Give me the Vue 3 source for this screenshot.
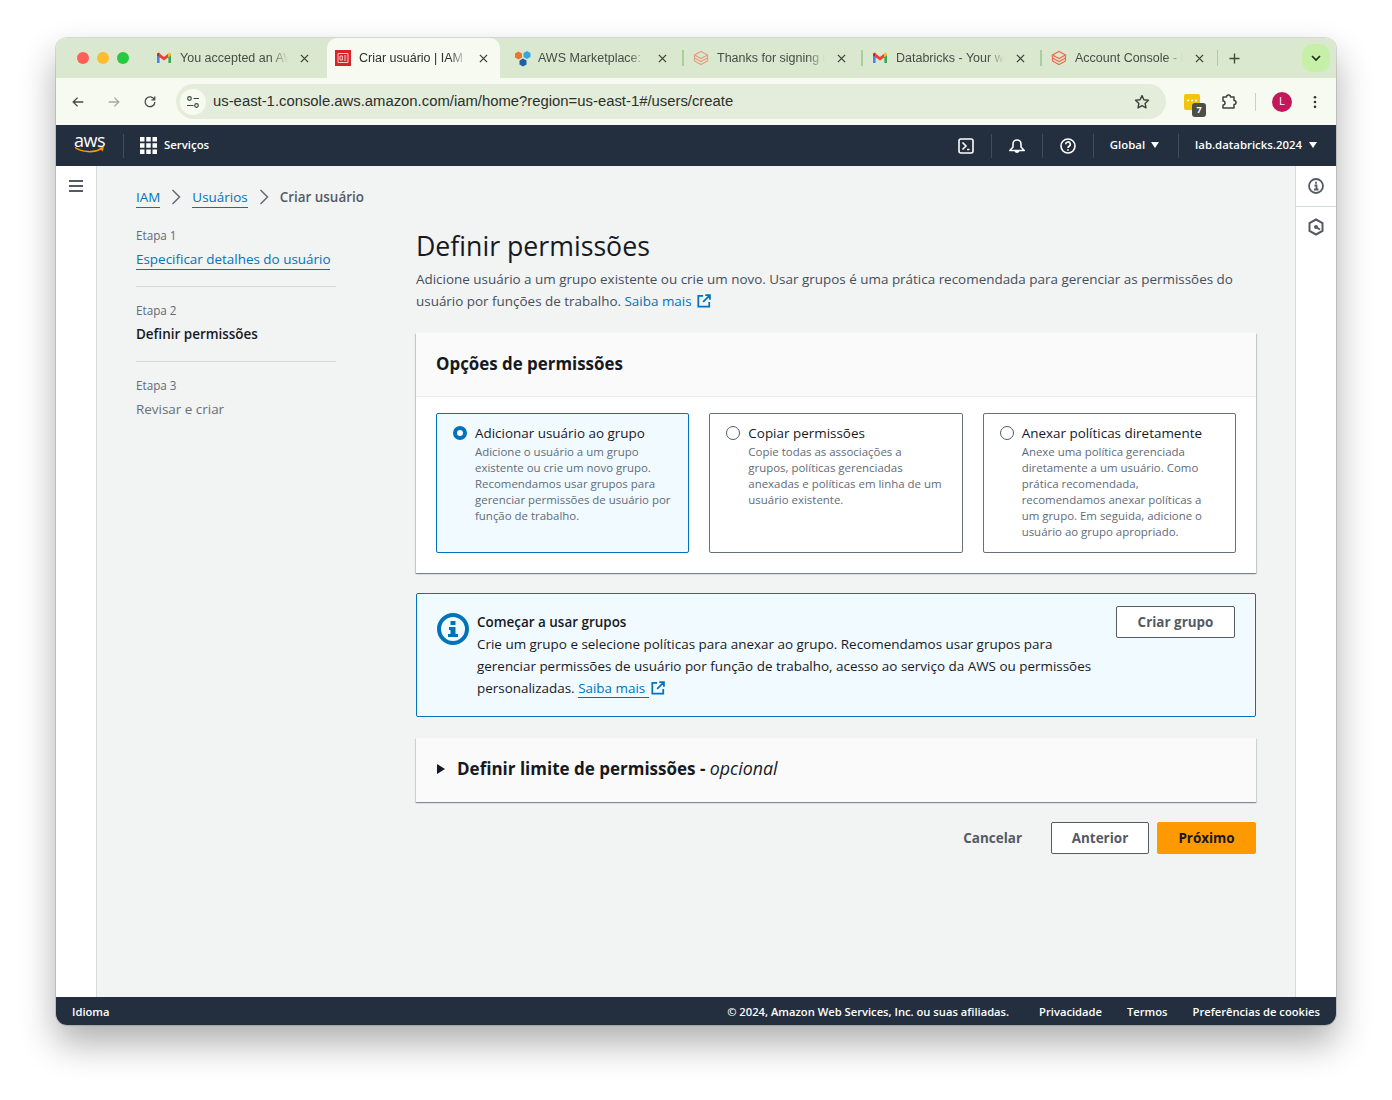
<script setup>
const tabs = [
  { title: 'You accepted an AWS Marketplace', icon: 'gmail' },
  { title: 'Criar usuário | IAM | Global', icon: 'iam', active: true },
  { title: 'AWS Marketplace: Databricks', icon: 'market' },
  { title: 'Thanks for signing up for', icon: 'bricks', pale: true },
  { title: 'Databricks - Your workspace', icon: 'gmail' },
  { title: 'Account Console - Databricks', icon: 'bricks' },
];

const steps = [
  { label: 'Etapa 1', name: 'Especificar detalhes do usuário', state: 'link' },
  { label: 'Etapa 2', name: 'Definir permissões', state: 'current' },
  { label: 'Etapa 3', name: 'Revisar e criar', state: 'todo' },
];

const options = [
  {
    title: 'Adicionar usuário ao grupo',
    text: 'Adicione o usuário a um grupo existente ou crie um novo grupo. Recomendamos usar grupos para gerenciar permissões de usuário por função de trabalho.',
    selected: true,
  },
  {
    title: 'Copiar permissões',
    text: 'Copie todas as associações a\ngrupos, políticas gerenciadas anexadas e políticas em linha de um usuário existente.',
  },
  {
    title: 'Anexar políticas diretamente',
    text: 'Anexe uma política gerenciada diretamente a um usuário. Como prática recomendada, recomendamos anexar políticas a um grupo. Em seguida, adicione o usuário ao grupo apropriado.',
  },
];
</script>

<template>
  <div class="page">
    <div class="window">
      <div class="tabstrip">
        <div class="lights">
          <i class="light red"></i>
          <i class="light yellow"></i>
          <i class="light green"></i>
        </div>
        <div
          v-for="(tab, i) in tabs"
          :key="i"
          class="tab"
          :class="{ active: tab.active, sep: i > 2, last: i === tabs.length - 1 }"
        >
          <svg v-if="tab.icon === 'gmail'" class="favicon" viewBox="0 0 16 16">
            <path d="M1 4v9h2.6V7.2z" fill="#4285f4" />
            <path d="M12.4 7.2V13H15V4z" fill="#34a853" />
            <path d="M3.6 7.2 8 10.4l4.4-3.2V3.6L8 6.9 3.6 3.6z" fill="#ea4335" />
            <path d="M1 4.4C1 3 2.6 2.3 3.6 3.1v4.1L1 5.3z" fill="#c5221f" />
            <path d="M15 4.4c0-1.4-1.6-2.1-2.6-1.3v4.1L15 5.3z" fill="#fbbc04" />
          </svg>
          <svg v-else-if="tab.icon === 'iam'" class="favicon" viewBox="0 0 16 16">
            <rect width="16" height="16" fill="#d6242d" />
            <path d="M3 3.5h10v9H3zM5 6h2.4v4H5zM9 6h2.2M9 8h2.2M9 10h2.2" fill="none" stroke="#f7c6c8" stroke-width="1" />
          </svg>
          <svg v-else-if="tab.icon === 'market'" class="favicon wide" viewBox="0 0 18 18">
            <path d="M1 4.5 4.5 2.5 8 4.5v4L4.5 10.5 1 8.5z" fill="#e8762d" />
            <path d="M9.5 4 13 2l3.5 2v4L13 10 9.5 8z" fill="#35a7d8" />
            <path d="M5.5 11.5 9 9.5l3.5 2v4L9 17.5l-3.500-2z" fill="#1f5fa8" />
          </svg>
          <svg v-else class="favicon" :class="{ pale: tab.pale }" viewBox="0 0 16 16" fill="none" stroke="#ee6a4d" stroke-width="1.2">
            <path d="M8 1.5 14.5 5 8 8.5 1.5 5z" />
            <path d="M1.500 5v3L8 11.500 14.500 8V5" />
            <path d="M1.500 8v3L8 14.500 14.500 11V8" />
          </svg>
          <span class="tab-title">{{ tab.title }}</span>
          <svg class="tab-close" viewBox="0 0 10 10">
            <path d="M1 1l8 8M9 1 1 9" stroke="currentColor" stroke-width="1.4" />
          </svg>
        </div>
        <svg class="new-tab" viewBox="0 0 12 12">
          <path d="M6 .5v11M.5 6h11" stroke="#3c4a3c" stroke-width="1.5" />
        </svg>
        <div class="tab-search">
          <svg width="10" height="7" viewBox="0 0 10 7">
            <path d="M1 1l4 4 4-4" fill="none" stroke="#1f2a1f" stroke-width="1.7" />
          </svg>
        </div>
      </div>

      <div class="toolbar">
        <svg class="tool" viewBox="0 0 16 16" fill="none" stroke="#444b44" stroke-width="1.5">
          <path d="M14 8H2.5M7.5 3 2.5 8l5 5" />
        </svg>
        <svg class="tool" viewBox="0 0 16 16" fill="none" stroke="#a3a8a1" stroke-width="1.5">
          <path d="M2 8h11.5M8.5 3l5 5-5 5" />
        </svg>
        <svg class="tool" viewBox="0 0 16 16" fill="none" stroke="#444b44" stroke-width="1.5">
          <path d="M13 5.2A5.6 5.6 0 1 0 13.6 8" />
          <path d="M13.4 1.8v3.8H9.6" />
        </svg>
        <div class="omnibox">
          <span class="site-info">
            <svg width="14" height="14" viewBox="0 0 14 14" fill="none" stroke="#3c4a3c" stroke-width="1.2">
              <circle cx="3.5" cy="3.5" r="1.8" />
              <path d="M7.5 3.5H13M1 10.5h6.5" />
              <circle cx="10.5" cy="10.5" r="1.8" />
            </svg>
          </span>
          <span class="url">us-east-1.console.aws.amazon.com/iam/home?region=us-east-1#/users/create</span>
          <svg class="star" viewBox="0 0 16 16" fill="none" stroke="#3c433c" stroke-width="1.4">
            <path d="M8 1.6l1.9 4.2 4.6.5-3.4 3.1.9 4.5-4-2.3-4 2.3.9-4.5L1.5 6.3l4.6-.5z" stroke-linejoin="round" />
          </svg>
        </div>
        <div class="ext">
          <svg class="ext-yellow" viewBox="0 0 16 16">
            <rect width="16" height="16" rx="2" fill="#f1c40f" />
            <circle cx="4" cy="6.500" r="1" fill="#fff" />
            <circle cx="8" cy="6.500" r="1" fill="#fff" />
            <circle cx="12" cy="6.500" r="1" fill="#fff" />
          </svg>
          <span class="ext-badge">7</span>
        </div>
        <svg class="puzzle" viewBox="0 0 18 18" fill="none" stroke="#3c433c" stroke-width="1.5">
          <path d="M3 4h3.500a2 2 0 0 1 4 0H14v3.500a2 2 0 0 1 0 4V15H3v-3a2 2 0 0 0 0-4z" stroke-linejoin="round" />
        </svg>
        <i class="tool-sep"></i>
        <span class="avatar">L</span>
        <svg class="kebab" viewBox="0 0 4 16">
          <circle cx="2" cy="2.500" r="1.500" fill="#2f352f" />
          <circle cx="2" cy="8" r="1.500" fill="#2f352f" />
          <circle cx="2" cy="13.500" r="1.500" fill="#2f352f" />
        </svg>
      </div>

      <header class="topnav">
        <div class="aws-logo">
          <span class="aws-text">aws</span>
          <svg width="32" height="8" viewBox="0 0 32 8">
            <path d="M1 1.500C8 6.500 20 7 27 2.800" fill="none" stroke="#ff9900" stroke-width="1.500" />
            <path d="M25 1.500 30 1l-1.500 4.500z" fill="#ff9900" />
          </svg>
        </div>
        <i class="nav-sep first"></i>
        <svg class="grid-icon" viewBox="0 0 17 17" fill="#fff">
          <rect width="4.500" height="4.500" />
          <rect x="6.250" width="4.500" height="4.500" />
          <rect x="12.500" width="4.500" height="4.500" />
          <rect y="6.250" width="4.500" height="4.500" />
          <rect x="6.250" y="6.250" width="4.500" height="4.500" />
          <rect x="12.500" y="6.250" width="4.500" height="4.500" />
          <rect y="12.500" width="4.500" height="4.500" />
          <rect x="6.250" y="12.500" width="4.500" height="4.500" />
          <rect x="12.500" y="12.500" width="4.500" height="4.500" />
        </svg>
        <span class="services">Serviços</span>
        <div class="nav-right">
          <svg class="nav-icon" viewBox="0 0 16 16" fill="none" stroke="#fff" stroke-width="1.600">
            <rect x="1" y="1" width="14" height="14" rx="2" />
            <path d="M4.500 4.500 8 8l-3.500 3.500M9 11.500h2.500" />
          </svg>
          <i class="nav-sep"></i>
          <svg class="nav-icon" viewBox="0 0 16 16" fill="none" stroke="#fff" stroke-width="1.600">
            <path d="M.8 12.500 4 9V6a4 4 0 0 1 8 0v3l3.200 3.500z" stroke-linejoin="round" />
            <path d="M6.200 12.800a1.900 1.900 0 0 0 3.600 0" />
          </svg>
          <i class="nav-sep"></i>
          <svg class="nav-icon" viewBox="0 0 16 16" fill="none" stroke="#fff" stroke-width="1.600">
            <circle cx="8" cy="8" r="7" />
            <path d="M5.700 6.200a2.300 2.300 0 1 1 3.400 2C8.300 8.700 8 9 8 10" />
            <path d="M8 11.200v1.500" />
          </svg>
          <i class="nav-sep"></i>
          <span class="nav-menu">Global<i class="caret"></i></span>
          <i class="nav-sep"></i>
          <span class="nav-menu account">lab.databricks.2024<i class="caret"></i></span>
        </div>
      </header>

      <div class="console">
        <aside class="side-left">
          <svg width="14" height="12" viewBox="0 0 14 12">
            <path d="M0 1h14M0 6h14M0 11h14" stroke="#545b64" stroke-width="2" />
          </svg>
        </aside>

        <main class="content">
          <nav class="crumbs">
            <a class="link">IAM</a>
            <svg class="crumb-arrow" viewBox="0 0 10 16" fill="none" stroke="#687078" stroke-width="1.600">
              <path d="M1.500 1l7 7-7 7" />
            </svg>
            <a class="link">Usuários</a>
            <svg class="crumb-arrow" viewBox="0 0 10 16" fill="none" stroke="#687078" stroke-width="1.600">
              <path d="M1.500 1l7 7-7 7" />
            </svg>
            <span class="crumb-current">Criar usuário</span>
          </nav>

          <div class="wizard">
            <ol class="steps">
              <li v-for="step in steps" :key="step.label" class="step">
                <small>{{ step.label }}</small>
                <a v-if="step.state === 'link'" class="link">{{ step.name }}</a>
                <strong v-else-if="step.state === 'current'">{{ step.name }}</strong>
                <span v-else class="todo">{{ step.name }}</span>
              </li>
            </ol>

            <section class="form">
              <h1>Definir permissões</h1>
              <p class="intro">
                Adicione usuário a um grupo existente ou crie um novo. Usar grupos é uma prática recomendada para gerenciar as permissões do usuário por funções de trabalho.
                <a class="plain-link">Saiba mais</a>
                <svg class="ext-link spaced" viewBox="0 0 16 16" fill="none" stroke="#0073bb" stroke-width="2">
                  <path d="M7 2H1.500v12.500H14V9M9.500 1.200h5.300v5.300M14.500 1.500 7 9" />
                </svg>
              </p>

              <div class="card">
                <h2 class="card-head">Opções de permissões</h2>
                <div class="card-body">
                  <label
                    v-for="opt in options"
                    :key="opt.title"
                    class="option"
                    :class="{ selected: opt.selected }"
                  >
                    <i class="radio"></i>
                    <span class="option-text">
                      <span class="option-title">{{ opt.title }}</span>
                      <span class="option-desc">{{ opt.text }}</span>
                    </span>
                  </label>
                </div>
              </div>

              <div class="info">
                <svg class="info-icon" viewBox="0 0 32 32">
                  <circle cx="16" cy="16" r="14" fill="none" stroke="#0073bb" stroke-width="4" />
                  <path d="M13.500 8h5v4h-5zM12 14h6.500v7H21v3H11v-3h2.500v-4H12z" fill="#0073bb" />
                </svg>
                <div class="info-text">
                  <strong>Começar a usar grupos</strong>
                  <p>
                    Crie um grupo e selecione políticas para anexar ao grupo. Recomendamos usar grupos para gerenciar permissões de usuário por função de trabalho, acesso ao serviço da AWS ou permissões personalizadas.
                    <a class="link">Saiba mais&nbsp;</a>
                    <svg class="ext-link" viewBox="0 0 16 16" fill="none" stroke="#0073bb" stroke-width="2">
                      <path d="M7 2H1.500v12.500H14V9M9.500 1.200h5.300v5.300M14.500 1.500 7 9" />
                    </svg>
                  </p>
                </div>
                <button class="btn">Criar grupo</button>
              </div>

              <div class="expander">
                <i class="expand-caret"></i>
                <h2>Definir limite de permissões - <em>opcional</em></h2>
              </div>

              <div class="actions">
                <button class="btn ghost">Cancelar</button>
                <button class="btn prev">Anterior</button>
                <button class="btn primary">Próximo</button>
              </div>
            </section>
          </div>
        </main>

        <aside class="side-right">
          <div class="rail-item">
            <svg width="16" height="16" viewBox="0 0 16 16" fill="none" stroke="#545b64" stroke-width="1.800">
              <circle cx="8" cy="8" r="7" />
              <path d="M8 3.800v2M6.500 7.500H8.500v4M6 11.500h4.500" />
            </svg>
          </div>
          <div class="rail-item">
            <svg width="16" height="18" viewBox="0 0 16 18" fill="none" stroke="#545b64" stroke-width="2">
              <path d="M8 1.500 14.500 5v8L8 16.500 1.500 13V5z" />
              <circle cx="8" cy="9" r="2" fill="#545b64" stroke="none" />
              <path d="M8 9l4 2.500" />
            </svg>
          </div>
        </aside>
      </div>

      <footer class="footer">
        <span>Idioma</span>
        <div class="footer-right">
          <span class="copy">© 2024, Amazon Web Services, Inc. ou suas afiliadas.</span>
          <span>Privacidade</span>
          <span>Termos</span>
          <span>Preferências de cookies</span>
        </div>
      </footer>
    </div>
  </div>
</template>

<style>
html,
body {
  margin: 0;
  background: #fff;
}
</style>

<style scoped>
.page {
  width: 1392px;
  height: 1100px;
  padding: 38px 56px 0;
  box-sizing: border-box;
  font-family: "Open Sans", "Noto Sans", sans-serif;
  color: #16191f;
  overflow: hidden;
}

.window {
  height: 987px;
  border-radius: 11px;
  display: flex;
  flex-direction: column;
  overflow: hidden;
  box-shadow: 0 0 0 1px rgba(0, 0, 0, 0.12), 0 18px 36px rgba(0, 0, 0, 0.32);
}

/* browser chrome */
.tabstrip {
  height: 40px;
  flex: none;
  background: #dbe8d0;
  display: flex;
  align-items: center;
  font-family: "Liberation Sans", Arial, sans-serif;
}

.lights {
  width: 92px;
  flex: none;
  display: flex;
  gap: 8px;
  padding-left: 21px;
  box-sizing: border-box;
}

.light {
  width: 12px;
  height: 12px;
  border-radius: 50%;
}

.red { background: #ff5f57; }
.yellow { background: #febc2e; }
.green { background: #28c840; }

.tab {
  position: relative;
  width: 173px;
  height: 40px;
  margin-right: 6px;
  flex: none;
  display: flex;
  align-items: center;
  padding: 0 12px 0 8px;
  box-sizing: border-box;
  font-size: 12.5px;
  color: #454d45;
}

.tab.active {
  background: #f6faf0;
  border-radius: 10px 10px 0 0;
  color: #2b302b;
}

.tab.sep::before,
.tab.last::after {
  content: "";
  position: absolute;
  left: -3px;
  top: 12px;
  height: 16px;
  width: 1.500px;
  background: #a9cf9a;
}

.tab.last::after {
  left: auto;
  right: -2px;
}

.favicon {
  width: 16px;
  height: 16px;
  flex: none;
}

.favicon.wide {
  width: 18px;
  height: 18px;
  margin-right: -2px;
}

.favicon.pale {
  opacity: 0.6;
}

.tab-title {
  margin-left: 8px;
  width: 108px;
  flex: none;
  white-space: nowrap;
  overflow: hidden;
  -webkit-mask-image: linear-gradient(90deg, #000 84%, transparent 100%);
  mask-image: linear-gradient(90deg, #000 84%, transparent 100%);
}

.tab-close {
  width: 9px;
  height: 9px;
  margin-left: auto;
  color: #3a423a;
}

.new-tab {
  width: 11px;
  height: 11px;
  margin-left: 7px;
  flex: none;
}

.tab-search {
  margin-left: 62px;
  width: 28px;
  height: 28px;
  border-radius: 10px;
  background: #c6f0a8;
  display: flex;
  align-items: center;
  justify-content: center;
  flex: none;
}

.toolbar {
  height: 47px;
  flex: none;
  background: #f6faf0;
  display: flex;
  align-items: center;
  padding-left: 15px;
  box-sizing: border-box;
}

.tool {
  width: 14px;
  height: 14px;
  margin-right: 22px;
  flex: none;
}

.tool:nth-of-type(3) {
  margin-right: 19px;
}

.omnibox {
  width: 990px;
  height: 35px;
  flex: none;
  border-radius: 18px;
  background: #e4eddb;
  display: flex;
  align-items: center;
  padding: 0 16px 0 4px;
  box-sizing: border-box;
}

.site-info {
  width: 26px;
  height: 26px;
  border-radius: 50%;
  background: #f6faf0;
  display: flex;
  align-items: center;
  justify-content: center;
  flex: none;
}

.url {
  margin-left: 7px;
  padding-bottom: 1px;
  font-family: "Liberation Sans", Arial, sans-serif;
  font-size: 14.85px;
  color: #2b302b;
  white-space: nowrap;
}

.star {
  width: 16px;
  height: 16px;
  margin-left: auto;
}

.ext {
  position: relative;
  width: 16px;
  height: 16px;
  margin-left: 18px;
  flex: none;
}

.ext-yellow {
  display: block;
  width: 16px;
  height: 16px;
}

.ext-badge {
  position: absolute;
  left: 8px;
  top: 9px;
  width: 14px;
  height: 14px;
  border-radius: 3px;
  background: #4a4f4a;
  color: #fff;
  font-size: 9px;
  font-weight: 700;
  line-height: 14px;
  text-align: center;
}

.puzzle {
  width: 18px;
  height: 18px;
  margin-left: 20px;
  flex: none;
}

.tool-sep {
  width: 1px;
  height: 18px;
  margin-left: 17px;
  background: #bcdcae;
  flex: none;
}

.avatar {
  width: 20px;
  height: 20px;
  margin-left: 16px;
  border-radius: 50%;
  background: #c2185b;
  color: #fff;
  font: 10px/20px "Liberation Sans", Arial, sans-serif;
  text-align: center;
  flex: none;
}

.kebab {
  width: 4px;
  height: 14px;
  margin-left: 21px;
  flex: none;
}

/* console nav */
.topnav {
  height: 41px;
  flex: none;
  background: #232f3e;
  display: flex;
  align-items: center;
  color: #fff;
  font-size: 11.4px;
  font-weight: 600;
}

.aws-logo {
  width: 31px;
  margin-left: 18px;
  flex: none;
  display: flex;
  flex-direction: column;
  align-items: center;
  position: relative;
}

.aws-text {
  font: 400 18px/14px "Open Sans", sans-serif;
  letter-spacing: -0.500px;
  margin-top: -4px;
}

.aws-logo svg {
  margin-top: -1px;
}

.nav-sep {
  width: 1px;
  height: 24px;
  background: #414d5c;
  flex: none;
}

.nav-sep.first {
  margin-left: 18px;
}

.grid-icon {
  width: 17px;
  height: 17px;
  margin-left: 16px;
  flex: none;
}

.services {
  margin-left: 7px;
  padding-bottom: 2px;
}

.nav-right {
  margin-left: auto;
  display: flex;
  align-items: center;
  padding-right: 19px;
}

.nav-icon {
  width: 16px;
  height: 16px;
  margin: 0 17px;
  flex: none;
}

.nav-menu {
  display: flex;
  align-items: center;
  gap: 6px;
  margin: 0 19px 0 16px;
  padding-bottom: 2px;
  white-space: nowrap;
}

.nav-menu.account {
  margin: 0 0 0 16px;
  gap: 7px;
}

.caret {
  width: 0;
  height: 0;
  border-left: 4.500px solid transparent;
  border-right: 4.500px solid transparent;
  border-top: 6px solid #fff;
}

/* console body */
.console {
  flex: 1;
  min-height: 0;
  display: flex;
  background: #f2f3f3;
}

.side-left {
  width: 40px;
  flex: none;
  background: #fff;
  border-right: 1px solid #d5dbdb;
  display: flex;
  justify-content: center;
  padding-top: 14px;
}

.side-right {
  width: 41px;
  flex: none;
  background: #fff;
  border-left: 1px solid #d5dbdb;
  box-sizing: border-box;
}

.rail-item {
  height: 41px;
  display: flex;
  align-items: center;
  justify-content: center;
  border-bottom: 1px solid #d5dbdb;
  box-sizing: border-box;
}

.rail-item + .rail-item {
  border-bottom: 0;
  padding-bottom: 2px;
}

.content {
  flex: 1;
  min-width: 0;
  padding: 20px 40px 0 39px;
  font-size: 13.45px;
  line-height: 22px;
}

.link {
  color: #0073bb;
  border-bottom: 1px solid #0073bb;
  line-height: 20px;
}

.plain-link {
  color: #0073bb;
}

.crumbs {
  display: flex;
  align-items: center;
  height: 22px;
}

.crumb-arrow {
  width: 10px;
  height: 16px;
  margin: 0 11px;
  flex: none;
}

.crumb-current {
  color: #545b64;
  font-weight: 600;
}

.wizard {
  display: grid;
  grid-template-columns: 200px 840px;
  column-gap: 80px;
  margin-top: 4px;
}

.steps {
  list-style: none;
  margin: 0;
  padding: 0;
}

.step {
  display: flex;
  flex-direction: column;
  align-items: flex-start;
  height: 75px;
  padding-top: 15px;
  box-sizing: border-box;
  border-bottom: 1px solid #d5dbdb;
  line-height: 20px;
  white-space: nowrap;
}

.step:last-child {
  border-bottom: 0;
}

.step small {
  font-size: 11.7px;
  line-height: 16px;
  height: 22px;
  color: #5f6b7a;
}

.step strong {
  font-weight: 600;
}

.todo {
  color: #687078;
}

.form {
  min-width: 0;
}

h1 {
  margin: 0;
  padding-top: 16px;
  font-size: 26.7px;
  font-weight: 400;
  line-height: 36px;
}

.intro {
  margin: 4px 0 0;
  color: #454f5b;
}

.ext-link {
  width: 14px;
  height: 14px;
  margin-left: 2px;
  vertical-align: -2px;
}

.ext-link.spaced {
  margin-left: 5px;
}

.card {
  margin-top: 21px;
  background: #fff;
  box-shadow: 0 1px 1px rgba(0, 28, 36, 0.3), 1px 1px 1px rgba(0, 28, 36, 0.15), -1px 1px 1px rgba(0, 28, 36, 0.15);
}

.card-head {
  margin: 0;
  height: 64px;
  padding: 0 20px 2px;
  display: flex;
  align-items: center;
  box-sizing: border-box;
  background: #fafafa;
  border-bottom: 1px solid #eaeded;
  font-size: 16.9px;
  font-weight: 700;
}

.card-body {
  padding: 16px 20px 20px;
  display: grid;
  grid-template-columns: repeat(3, 1fr);
  gap: 20px;
}

.option {
  height: 140px;
  padding: 10px 16px;
  box-sizing: border-box;
  border: 1px solid #687078;
  border-radius: 2px;
  display: flex;
  gap: 8px;
}

.option.selected {
  background: #f1faff;
  border-color: #0073bb;
}

.radio {
  width: 14px;
  height: 14px;
  margin-top: 2px;
  border: 1px solid #545b64;
  border-radius: 50%;
  background: #fff;
  flex: none;
  box-sizing: border-box;
}

.selected .radio {
  border: 4px solid #0073bb;
}

.option-text {
  display: flex;
  flex-direction: column;
  min-width: 0;
}

.option-title {
  font-size: 13.45px;
  line-height: 18px;
}

.option-desc {
  margin-top: 2px;
  font-size: 11.45px;
  line-height: 16px;
  color: #5f6b7a;
  white-space: pre-line;
}

.info {
  margin-top: 20px;
  height: 124px;
  padding: 12px 20px;
  box-sizing: border-box;
  display: flex;
  align-items: flex-start;
  background: #f1faff;
  border: 1px solid #0073bb;
  border-radius: 2px;
}

.info-icon {
  width: 32px;
  height: 32px;
  margin-top: 7px;
  flex: none;
}

.info-text {
  width: 620px;
  margin-left: 8px;
  flex: none;
  padding-top: 6px;
}

.info-text strong {
  display: block;
  font-weight: 600;
  line-height: 21px;
}

.info-text p {
  margin: 0;
}

.btn {
  height: 32px;
  padding: 0 20px;
  box-sizing: border-box;
  border: 1px solid #545b64;
  border-radius: 2px;
  background: #fff;
  color: #545b64;
  font-family: inherit;
  font-size: 13.45px;
  font-weight: 700;
  white-space: nowrap;
}

.info .btn {
  margin-left: auto;
  width: 119px;
  padding: 0;
}

.expander {
  margin-top: 21px;
  height: 64px;
  padding: 0 20px 3px;
  display: flex;
  align-items: center;
  background: #fafafa;
  box-sizing: border-box;
  box-shadow: 0 1px 1px rgba(0, 28, 36, 0.35), 1px 1px 1px rgba(0, 28, 36, 0.1), -1px 1px 1px rgba(0, 28, 36, 0.1);
}

.expander h2 {
  margin: 0 0 0 12px;
  font-size: 17px;
  font-weight: 700;
  white-space: nowrap;
}

.expander em {
  font-weight: 400;
  font-size: 17.8px;
}

.expand-caret {
  width: 0;
  height: 0;
  border-top: 5.500px solid transparent;
  border-bottom: 5.500px solid transparent;
  border-left: 8px solid #16191f;
  flex: none;
  margin-left: 1px;
}

.actions {
  margin-top: 20px;
  display: flex;
  justify-content: flex-end;
  gap: 8px;
}

.btn.ghost {
  border-color: transparent;
  background: none;
}

.btn.prev {
  width: 98px;
  padding: 0;
}

.btn.primary {
  width: 99px;
  padding: 0;
  background: #ff9900;
  border-color: #ff9900;
  color: #16191f;
}

.footer {
  height: 28px;
  flex: none;
  background: #232f3e;
  color: #fff;
  font-size: 11.2px;
  font-weight: 600;
  display: flex;
  align-items: center;
  justify-content: space-between;
  padding: 0 16px;
}

.footer-right {
  display: flex;
  gap: 25px;
}

.copy {
  margin-right: 5px;
}
</style>
